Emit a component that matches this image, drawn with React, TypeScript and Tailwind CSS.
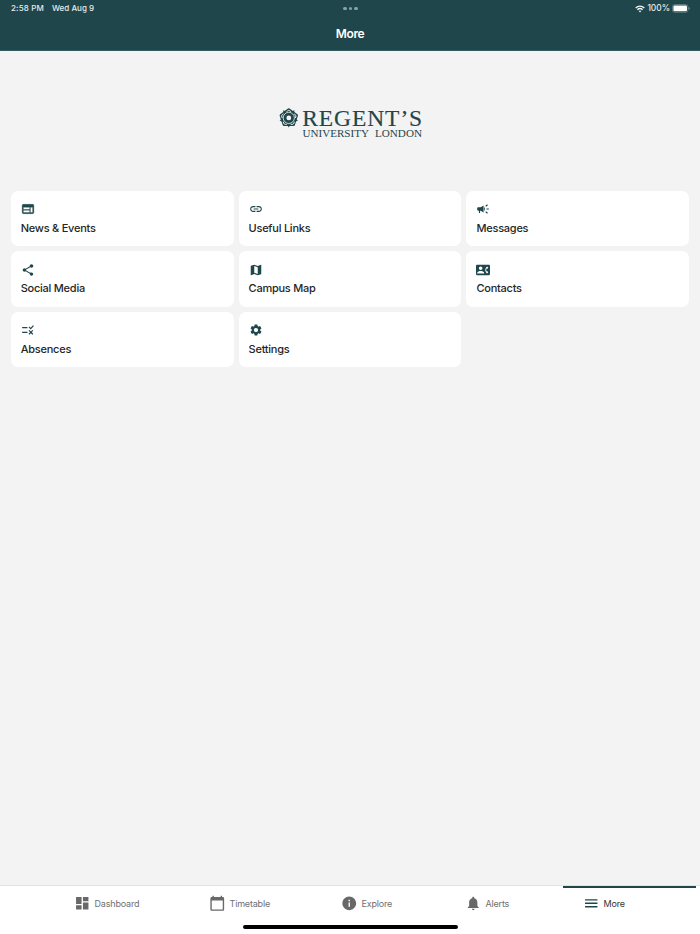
import type { IconType } from 'react-icons'
import {
  MdCalendarToday,
  MdCampaign,
  MdContactPhone,
  MdDashboard,
  MdInfo,
  MdLink,
  MdMap,
  MdMenu,
  MdNotifications,
  MdRule,
  MdSettings,
  MdShare,
  MdWeb,
} from 'react-icons/md'
import clsx from 'clsx'

interface Tile {
  label: string
  icon: IconType
  // Thin glyphs get a hairline stroke so they weigh the same as the rest.
  heavy?: boolean
}

interface Tab {
  label: string
  icon: IconType
  className: string
  active?: boolean
}

const TILES: Tile[] = [
  { label: 'News & Events', icon: MdWeb, heavy: true },
  { label: 'Useful Links', icon: MdLink },
  { label: 'Messages', icon: MdCampaign },
  { label: 'Social Media', icon: MdShare },
  { label: 'Campus Map', icon: MdMap },
  { label: 'Contacts', icon: MdContactPhone },
  { label: 'Absences', icon: MdRule },
  { label: 'Settings', icon: MdSettings },
]

const TABS: Tab[] = [
  { label: 'Dashboard', icon: MdDashboard, className: 'w-[135px]' },
  { label: 'Timetable', icon: MdCalendarToday, className: 'w-[132px]' },
  { label: 'Explore', icon: MdInfo, className: 'w-[124px]' },
  { label: 'Alerts', icon: MdNotifications, className: 'w-[118px]' },
  { label: 'More', icon: MdMenu, className: 'w-[45px]', active: true },
]

function StatusBar() {
  return (
    <div className="grid h-[17px] grid-cols-3 items-center pl-[11px] pr-[10px] text-[8px] font-medium leading-none text-[#e6eced]">
      <div className="flex gap-[7px] pb-px">
        <span className="w-[34px] whitespace-nowrap tracking-[0.02em]">2:58 PM</span>
        <span className="whitespace-nowrap">Wed Aug 9</span>
      </div>
      <div className="flex justify-center gap-[2px]">
        <span className="size-[3.6px] rounded-full bg-[#8ba3a6]" />
        <span className="size-[3.6px] rounded-full bg-[#8ba3a6]" />
        <span className="size-[3.6px] rounded-full bg-[#8ba3a6]" />
      </div>
      <div className="flex items-center justify-end">
        <svg width="10" height="8" viewBox="0 0 10 8" fill="none" stroke="#f1f5f5" strokeWidth="1.4">
          <path d="M.7 2.9a6.2 6.2 0 0 1 8.6 0M2.4 4.8a3.8 3.8 0 0 1 5.2 0" />
          <path d="M3.7 6.1a1.9 1.9 0 0 1 2.6 0L5 7.5z" fill="#f1f5f5" stroke="none" />
        </svg>
        <span className="ml-[2.5px] text-[8.4px]">100%</span>
        <svg className="ml-[2px]" width="18" height="9" viewBox="0 0 18 9">
          <rect x=".4" y=".5" width="15.6" height="7.8" rx="2.2" fill="none" stroke="#6f8d90" strokeWidth=".7" />
          <rect x="1.4" y="1.5" width="13.6" height="5.8" rx="1.2" fill="#fff" />
          <path d="M16.7 3.1v2.6q1-.4 1-1.3t-1-1.3z" fill="#8ba3a6" />
        </svg>
      </div>
    </div>
  )
}

const PETALS = [0, 72, 144, 216, 288]

function Logo() {
  return (
    <svg width="146" height="34" viewBox="0 0 146 34" fill="#1f464b" aria-label="Regent's University London">
      <g transform="translate(11.8 12.9)">
        <path
          d="M0-8.3 7.9-2.6 4.9 6.7h-9.8L-7.9-2.6z"
          stroke="#1f464b"
          strokeWidth="2.6"
          strokeLinejoin="round"
        />
        {PETALS.map((a) => (
          <g key={a} transform={`rotate(${a})`}>
            {/* inner edge of the petal */}
            <path d="M-2.2-6.3Q0-8.9 2.2-6.3" fill="none" stroke="#f3f3f3" strokeWidth=".9" />
            {/* sepal tip between two petals */}
            <path d="M0-9.6 1.3-7.4h-2.6z" transform="rotate(36)" />
          </g>
        ))}
        <circle r="5.6" fill="#1f464b" stroke="#f3f3f3" strokeWidth=".8" />
        <circle r="2.4" fill="#f3f3f3" />
      </g>
      <g fontFamily="'Liberation Serif', serif">
        <text x="25.2" y="21" fontSize="23.5" textLength="120" stroke="#1f464b" strokeWidth=".15">
          REGENT’S
        </text>
        <g fontSize="10.6">
          <text x="25.5" y="32" textLength="66.5" lengthAdjust="spacingAndGlyphs">
            UNIVERSITY
          </text>
          <text x="98" y="32" textLength="47" lengthAdjust="spacingAndGlyphs">
            LONDON
          </text>
        </g>
      </g>
    </svg>
  )
}

function MenuTile({ label, icon: Icon, heavy }: Tile) {
  return (
    <button
      type="button"
      className="flex h-[55.4px] flex-col items-start rounded-[7px] bg-white pl-[10px] pt-[11.3px] text-left"
    >
      <Icon className={clsx('size-[14px] text-[#1f464b]', heavy && '[&>path:last-child]:[stroke-width:0.6]')} />
      <span className="mt-[4.4px] text-[11px] font-medium leading-[15px] tracking-[-0.022em] text-[#262626]">
        {label}
      </span>
    </button>
  )
}

function TabBar() {
  return (
    <nav className="flex h-[49px] flex-col border-t border-[#e2e2e2] bg-white">
      <div className="ml-[563px] h-[1.5px] w-[133px] shrink-0 bg-[#1f464b]" />
      <div className="flex h-[32px] items-center pl-[74px]">
        {TABS.map(({ label, icon: Icon, className, active }) => (
          <button
            key={label}
            type="button"
            className={clsx(
              'flex shrink-0 items-center gap-[4px] whitespace-nowrap text-[9px] tracking-[-0.02em]',
              className,
              active ? 'text-[#333]' : 'text-[#707070]',
            )}
          >
            <Icon className={clsx('size-[16.5px] shrink-0', active ? 'text-[#1f464b]' : 'text-[#686868]')} />
            <span className="pt-px">{label}</span>
          </button>
        ))}
      </div>
      <div className="mx-auto mt-[5px] h-[4px] w-[215px] shrink-0 rounded-full bg-black" />
    </nav>
  )
}

export default function App() {
  return (
    <div className="flex h-[934px] w-[700px] flex-col overflow-hidden bg-[#f3f3f3] font-['Inter',sans-serif]">
      <header className="h-[51px] shrink-0 border-b border-[#345b60] bg-[#1f464b]">
        <StatusBar />
        <h1 className="text-center text-[12px] font-semibold leading-[34px] tracking-[-0.03em] text-white">More</h1>
      </header>
      <main className="flex-1">
        <div className="flex justify-center pt-[54px]">
          <Logo />
        </div>
        <div className="mt-[52px] grid grid-cols-3 gap-x-[5px] gap-y-[5.1px] px-[10.7px]">
          {TILES.map((tile) => (
            <MenuTile key={tile.label} {...tile} />
          ))}
        </div>
      </main>
      <TabBar />
    </div>
  )
}
